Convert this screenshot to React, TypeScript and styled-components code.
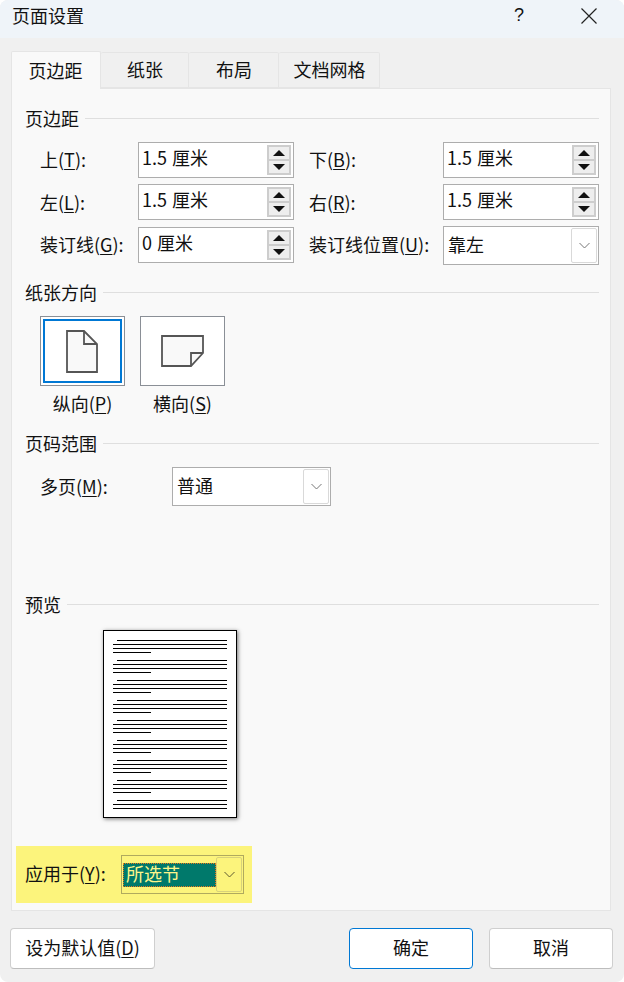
import React from 'react';
import styled, { createGlobalStyle } from 'styled-components';

const GlobalStyle = createGlobalStyle`
	html, body {
		margin: 0;
		padding: 0;
		background: #fff;
	}
	* {
		box-sizing: border-box;
	}
`;

const Dialog = styled.div`
	width: 624px;
	height: 982px;
	display: flex;
	flex-direction: column;
	background: #f0f0f0;
	border-radius: 8px;
	overflow: hidden;
	color: #111;
	font-family: 'Noto Sans CJK SC', 'Noto Sans', sans-serif;
	font-size: 18px;
	line-height: 24px;
`;

const TitleBar = styled.div`
	height: 38px;
	flex: none;
	display: flex;
	align-items: center;
	padding-left: 12px;
	background: #eff4f9;
`;

const Title = styled.div`
	flex: 1;
	margin-top: -8px;
`;

const HelpMark = styled.div`
	width: 24px;
	margin-right: 50px;
	margin-top: -8px;
	text-align: center;
	font-family: 'Liberation Sans', sans-serif;
`;

const CloseIcon = styled.svg`
	width: 16px;
	height: 16px;
	margin-right: 27px;
	margin-top: -7px;
`;

const Body = styled.div`
	flex: 1;
	display: flex;
	flex-direction: column;
	padding: 13px 11px 13px 10px;
`;

const Tabs = styled.div`
	height: 37px;
	flex: none;
	display: flex;
	align-items: flex-end;
	padding-left: 1px;
	position: relative;
	z-index: 1;
`;

const Tab = styled.div<{ $active?: boolean; $width: number }>`
	width: ${(p) => p.$width}px;
	height: ${(p) => (p.$active ? 38 : 36)}px;
	margin-bottom: ${(p) => (p.$active ? -1 : 0)}px;
	display: flex;
	align-items: center;
	justify-content: center;
	padding: ${(p) => (p.$active ? '0 1px 2px 0' : '0 0 2px 1px')};
	background: ${(p) => (p.$active ? '#f9f9f9' : '#f0f0f0')};
	border: 1px solid #e5e5e5;
	border-bottom: ${(p) => (p.$active ? 'none' : '1px solid #e5e5e5')};
	border-left: ${(p) => (p.$active ? '1px solid #e5e5e5' : 'none')};
	border-radius: 2px 2px 0 0;
`;

const Panel = styled.div`
	width: 600px;
	height: 823px;
	margin-left: 1px;
	flex: none;
	display: flex;
	flex-direction: column;
	background: #f9f9f9;
	border: 1px solid #e5e5e5;
	padding: 0 11px 0 13px;
`;

const SectionHeader = styled.div<{ $top: number }>`
	height: 24px;
	margin-top: ${(p) => p.$top}px;
	flex: none;
	display: flex;
	align-items: center;
	gap: 6px;

	&::after {
		content: '';
		flex: 1;
		height: 1px;
		background: #dfdfdf;
	}
`;

const MarginGrid = styled.div`
	margin-top: 12px;
	display: grid;
	grid-template-columns: 113px 156px 149px 156px;
	grid-template-rows: 36px 37px 36px;
	row-gap: 6px;
`;

const FieldLabel = styled.div<{ $indent?: number }>`
	display: flex;
	align-items: center;
	padding-left: ${(p) => p.$indent ?? 0}px;
	padding-bottom: 2px;
	white-space: pre;
`;

const Underlined = styled.span`
	text-decoration: underline;
	text-underline-offset: 2px;
	text-decoration-thickness: 1px;
`;

const SpinBox = styled.div`
	height: 36px;
	display: flex;
	align-items: center;
	background: #fff;
	border: 1px solid #adadad;
	padding: 2px 2px 2px 3px;
`;

const SpinValue = styled.div`
	flex: 1;
	margin-top: -7px;
	word-spacing: 1px;
`;

const SpinButtons = styled.div`
	width: 24px;
	height: 30px;
	display: flex;
	flex-direction: column;
`;

const SpinButton = styled.div`
	flex: 1;
	display: flex;
	align-items: center;
	justify-content: center;
	background: #eeeeee;
	border: 2px solid #cdcdcd;
	& + & {
		border-top: none;
	}
`;

const Arrow = styled.svg`
	width: 12px;
	height: 6px;
	fill: #111;
`;

const SelectBox = styled.div<{ $width: number; $height: number }>`
	width: ${(p) => p.$width}px;
	height: ${(p) => p.$height}px;
	display: flex;
	align-items: center;
	justify-content: space-between;
	background: #fff;
	border: 1px solid #adadad;
	padding: 1px 1px 1px 4px;
`;

const SelectValue = styled.div`
	margin-top: -3px;
`;

const SelectButton = styled.div`
	width: 26px;
	height: 100%;
	display: flex;
	align-items: center;
	justify-content: center;
	background: #fff;
	border: 1px solid #d9d9d9;
	border-radius: 2px;
`;

const Chevron = styled.svg<{ $dark?: boolean }>`
	width: 11px;
	height: 7px;
	fill: none;
	stroke: ${(p) => (p.$dark ? '#5f5b30' : '#777')};
	stroke-width: 1;
`;

const GutterSelect = styled(SelectBox)`
	margin-top: -1px;
`;

const OrientationRow = styled.div`
	margin-top: 12px;
	margin-left: 15px;
	display: flex;
	gap: 15px;
`;

const Orientation = styled.div`
	width: 85px;
	display: flex;
	flex-direction: column;
	align-items: center;
`;

const OrientationButton = styled.div<{ $selected?: boolean }>`
	width: 85px;
	height: 70px;
	display: flex;
	align-items: center;
	justify-content: center;
	padding-right: ${(p) => (p.$selected ? 2 : 0)}px;
	background: #fff;
	border: 1px solid #8a8f96;
	box-shadow: ${(p) => (p.$selected ? 'inset 0 0 0 2px #fff, inset 0 0 0 4px #0078d4' : 'none')};
`;

const OrientationText = styled.div`
	margin-top: 5px;
	white-space: pre;
`;

const PagesRow = styled.div`
	margin-top: 12px;
	padding-left: 15px;
	display: flex;
	align-items: center;
`;

const PagesLabel = styled.div`
	width: 132px;
	margin-top: -2px;
`;

const PreviewArea = styled.div`
	margin-top: 14px;
	margin-left: 78px;
`;

const PreviewPage = styled.div`
	width: 134px;
	height: 188px;
	display: flex;
	flex-direction: column;
	background: #fff;
	border: 1px solid #000;
	box-shadow: 1px 1px 4px rgba(0, 0, 0, 0.55);
	padding: 9px 9px 0 9px;
	overflow: hidden;
`;

const ParagraphBlock = styled.div`
	height: 20px;
	flex: none;
	display: flex;
	flex-direction: column;
	gap: 3px;
`;

const TextLine = styled.div<{ $kind: 'first' | 'full' | 'last' }>`
	height: 1px;
	flex: none;
	background: #000;
	margin-left: ${(p) => (p.$kind === 'first' ? 4 : 0)}px;
	width: ${(p) => (p.$kind === 'last' ? '38px' : 'auto')};
`;

const ApplyBar = styled.div`
	width: 236px;
	height: 57px;
	margin-top: 28px;
	margin-left: -9px;
	display: flex;
	align-items: center;
	padding-left: 9px;
	background: #fcf47c;
`;

const ApplyLabel = styled.div`
	width: 96px;
	flex: none;
	margin-top: -3px;
`;

const ApplySelect = styled.div`
	width: 123px;
	height: 39px;
	display: flex;
	align-items: center;
	border: 1px solid #b0aa5e;
	padding: 1px;
`;

const ApplyValue = styled.div`
	width: 93px;
	height: 24px;
	flex: none;
	display: flex;
	align-items: center;
	padding: 0 0 4px 3px;
	background: #00796b;
	outline: 1px dotted #e8761a;
	outline-offset: -1px;
	color: #fdf58a;
`;

const ApplyButton = styled.div`
	width: 26px;
	height: 100%;
	display: flex;
	align-items: center;
	justify-content: center;
	border: 1px solid #d8d27a;
	border-radius: 2px;
`;

const Footer = styled.div`
	margin-top: 17px;
	display: flex;
	gap: 16px;
`;

const PushButton = styled.div<{ $width: number; $primary?: boolean }>`
	width: ${(p) => p.$width}px;
	height: 41px;
	display: flex;
	align-items: center;
	justify-content: center;
	padding-bottom: 3px;
	background: #fff;
	border: 1px solid ${(p) => (p.$primary ? '#0078d4' : '#cfcfcf')};
	border-bottom-color: ${(p) => (p.$primary ? '#0078d4' : '#bdbdbd')};
	border-radius: 4px;
	white-space: pre;
`;

const DefaultButton = styled(PushButton)`
	margin-right: auto;
`;

const Up = () => (
	<Arrow viewBox="0 0 12 6">
		<path d="M6 0 12 6H0z" />
	</Arrow>
);

const Down = () => (
	<Arrow viewBox="0 0 12 6">
		<path d="M0 0h12L6 6z" />
	</Arrow>
);

const ChevronDown = ({ dark }: { dark?: boolean }) => (
	<Chevron viewBox="0 0 11 7" $dark={dark}>
		<path d="M0.5 1 5.5 6 10.5 1" />
	</Chevron>
);

const Spin = ({ value }: { value: string }) => (
	<SpinBox>
		<SpinValue>{value}</SpinValue>
		<SpinButtons>
			<SpinButton>
				<Up />
			</SpinButton>
			<SpinButton>
				<Down />
			</SpinButton>
		</SpinButtons>
	</SpinBox>
);

const Label = ({ before, mnemonic, indent }: { before: string; mnemonic: string; indent?: number }) => (
	<FieldLabel $indent={indent}>
		{before}(<Underlined>{mnemonic}</Underlined>):
	</FieldLabel>
);

const paragraphs = Array.from({ length: 9 });

export default function App() {
	return (
		<>
			<GlobalStyle />
			<Dialog>
				<TitleBar>
					<Title>页面设置</Title>
					<HelpMark>?</HelpMark>
					<CloseIcon viewBox="0 0 16 16">
						<path d="M0.5 0.5 15.5 15.5M15.5 0.5 0.5 15.5" stroke="#222" strokeWidth="1.2" fill="none" />
					</CloseIcon>
				</TitleBar>
				<Body>
					<Tabs>
						<Tab $active $width={90}>页边距</Tab>
						<Tab $width={88}>纸张</Tab>
						<Tab $width={90}>布局</Tab>
						<Tab $width={101}>文档网格</Tab>
					</Tabs>
					<Panel>
						<SectionHeader $top={17}>页边距</SectionHeader>
						<MarginGrid>
							<Label before="上" mnemonic="T" indent={15} />
							<Spin value="1.5 厘米" />
							<Label before="下" mnemonic="B" indent={15} />
							<Spin value="1.5 厘米" />
							<Label before="左" mnemonic="L" indent={15} />
							<Spin value="1.5 厘米" />
							<Label before="右" mnemonic="R" indent={15} />
							<Spin value="1.5 厘米" />
							<Label before="装订线" mnemonic="G" indent={15} />
							<Spin value="0 厘米" />
							<Label before="装订线位置" mnemonic="U" indent={15} />
							<GutterSelect $width={156} $height={39}>
								<SelectValue>靠左</SelectValue>
								<SelectButton>
									<ChevronDown />
								</SelectButton>
							</GutterSelect>
						</MarginGrid>
						<SectionHeader $top={17}>纸张方向</SectionHeader>
						<OrientationRow>
							<Orientation>
								<OrientationButton $selected>
									<svg width="32" height="43" viewBox="0 0 32 43" fill="none" stroke="#555" strokeWidth="1.8">
										<path d="M1 1H18L31 14V42H1Z" fill="#f9f9f9" />
										<path d="M18 1V14H31" fill="none" />
									</svg>
								</OrientationButton>
								<OrientationText>
									纵向(<Underlined>P</Underlined>)
								</OrientationText>
							</Orientation>
							<Orientation>
								<OrientationButton>
									<svg width="43" height="32" viewBox="0 0 43 32" fill="none" stroke="#555" strokeWidth="1.8">
										<path d="M1 1H42V18L30 31H1Z" fill="#f9f9f9" />
										<path d="M30 31V18H42" fill="none" />
									</svg>
								</OrientationButton>
								<OrientationText>
									横向(<Underlined>S</Underlined>)
								</OrientationText>
							</Orientation>
						</OrientationRow>
						<SectionHeader $top={16}>页码范围</SectionHeader>
						<PagesRow>
							<PagesLabel>
								多页(<Underlined>M</Underlined>):
							</PagesLabel>
							<SelectBox $width={159} $height={39}>
								<SelectValue>普通</SelectValue>
								<SelectButton>
									<ChevronDown />
								</SelectButton>
							</SelectBox>
						</PagesRow>
						<SectionHeader $top={86}>预览</SectionHeader>
						<PreviewArea>
							<PreviewPage>
								{paragraphs.map((_, i) => (
									<ParagraphBlock key={i}>
										<TextLine $kind="first" />
										<TextLine $kind="full" />
										<TextLine $kind="full" />
										{i < 8 && <TextLine $kind="last" />}
									</ParagraphBlock>
								))}
							</PreviewPage>
						</PreviewArea>
						<ApplyBar>
							<ApplyLabel>
								应用于(<Underlined>Y</Underlined>):
							</ApplyLabel>
							<ApplySelect>
								<ApplyValue>所选节</ApplyValue>
								<ApplyButton>
									<ChevronDown dark />
								</ApplyButton>
							</ApplySelect>
						</ApplyBar>
					</Panel>
					<Footer>
						<DefaultButton $width={145}>
							设为默认值(<Underlined>D</Underlined>)
						</DefaultButton>
						<PushButton $width={124} $primary>确定</PushButton>
						<PushButton $width={124}>取消</PushButton>
					</Footer>
				</Body>
			</Dialog>
		</>
	);
}
